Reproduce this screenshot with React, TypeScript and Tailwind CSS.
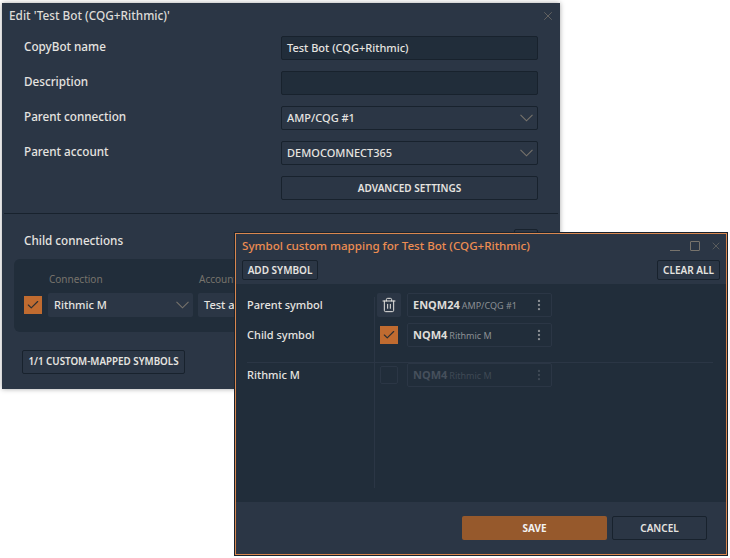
import React from "react";
import { Check, X, Trash2, EllipsisVertical } from "lucide-react";

const fieldText = "text-[11px] font-medium text-[#e6e4e0]";

function Chevron() {
  return (
    <svg width="13" height="8" viewBox="0 0 13 8" fill="none" stroke="#77736c" strokeWidth="1.1" className="shrink-0">
      <path d="M0.5 0.8 L6.5 6.8 L12.5 0.8" />
    </svg>
  );
}

function FormRow({ label, children }: { label: string; children: React.ReactNode }) {
  return (
    <div className="flex h-6 items-start pr-[22px]">
      <span className="w-[257px] pt-px text-[11.7px] font-medium leading-[18px] text-[#e6e4e0]">{label}</span>
      <div className="w-[257px]">{children}</div>
    </div>
  );
}

function TextBox({ value }: { value?: string }) {
  return (
    <div className={`flex h-6 items-center rounded-[2px] border border-[#18222d] bg-[#212d3a] pl-[5px] ${fieldText}`}>
      {value}
    </div>
  );
}

function SelectBox({ value }: { value: string }) {
  return (
    <div
      className={`flex h-6 items-center justify-between rounded-[2px] border border-[#18222d] bg-[#2b3645] pl-[5px] pr-1 ${fieldText}`}
    >
      <span>{value}</span>
      <Chevron />
    </div>
  );
}

function SymbolBox({ name, source, dim }: { name: string; source: string; dim?: boolean }) {
  return (
    <div className="flex h-6 w-[145px] items-center justify-between rounded-[2px] border border-[#2b3645] pl-[5px] pr-[5px]">
      <span className={dim ? "text-[11px] font-bold text-[#46505c]" : "text-[11px] font-bold text-[#dedcd8]"}>
        {name}
        <span className={dim ? "ml-[2px] text-[9px] font-normal text-[#3f4955]" : "ml-[2px] text-[9px] font-normal text-[#8b8f94]"}>
          {source}
        </span>
      </span>
      <EllipsisVertical className={dim ? "h-3.5 w-3.5 text-[#3f4955]" : "h-3.5 w-3.5 text-[#8b8f94]"} strokeWidth={2} />
    </div>
  );
}

function CheckBox() {
  return (
    <div className="flex h-[18px] w-[18px] items-center justify-center bg-[#c06b30]">
      <Check className="h-3.5 w-3.5 text-[#2b2f33]" strokeWidth={2} />
    </div>
  );
}

function OutlineButton({ children, className }: { children: React.ReactNode; className: string }) {
  return (
    <button
      className={`flex items-center justify-center rounded-[2px] border border-[#18222d] font-semibold text-[#e6e4e0] ${className}`}
    >
      {children}
    </button>
  );
}

export default function App() {
  return (
    <div className="relative h-[558px] w-[730px] overflow-hidden bg-white font-['Noto_Sans',sans-serif]">
      {/* Edit window */}
      <div className="absolute left-[2px] top-[3px] h-[386px] w-[558px] bg-[#2b3645] shadow-[0_0_5px_rgba(0,0,0,0.35)]">
        <div className="flex h-[25px] items-center justify-between pl-[7px] pr-[5px]">
          <span className="text-[11.8px] font-medium text-[#dedcd8]">Edit 'Test Bot (CQG+Rithmic)'</span>
          <X className="h-3.5 w-3.5 text-[#77736c]" strokeWidth={1.25} />
        </div>

        <div className="flex flex-col gap-[11px] pl-[22px] pt-2">
          <FormRow label="CopyBot name">
            <TextBox value="Test Bot (CQG+Rithmic)" />
          </FormRow>
          <FormRow label="Description">
            <TextBox />
          </FormRow>
          <FormRow label="Parent connection">
            <SelectBox value="AMP/CQG #1" />
          </FormRow>
          <FormRow label="Parent account">
            <SelectBox value="DEMOCOMNECT365" />
          </FormRow>
          <FormRow label="">
            <OutlineButton className="h-6 w-full text-[10px]">ADVANCED SETTINGS</OutlineButton>
          </FormRow>
        </div>

        <div className="mx-0.5 mt-[13px] h-px bg-[#18222d]" />

        <div className="flex items-center justify-between pl-[22px] pr-[22px] pt-[13px]">
          <span className="pb-0.5 text-[11.7px] font-medium leading-[26px] text-[#e6e4e0]">Child connections</span>
          <div className="h-6 w-6 rounded-[2px] border border-[#18222d]" />
        </div>

        <div className="mx-3 mt-[4px] h-[73px] rounded-md bg-[#212d3a] pl-2.5 pt-[13px]">
          <div className="flex gap-[5px] pl-[25px] text-[10px] leading-[14px] text-[#77736c]">
            <span className="w-[145px]">Connection</span>
            <span>Account</span>
          </div>
          <div className="mt-[7px] flex items-center">
            <CheckBox />
            <div className={`ml-1.5 flex h-6 w-[145px] items-center justify-between rounded-[2px] bg-[#2b3645] pl-1.5 pr-1 ${fieldText}`}>
              <span>Rithmic M</span>
              <Chevron />
            </div>
            <div className={`ml-[5px] flex h-6 w-[145px] items-center rounded-[2px] bg-[#2b3645] pl-1.5 ${fieldText}`}>
              Test account
            </div>
          </div>
        </div>

        <OutlineButton className="ml-5 mt-[18px] h-6 w-[163px] text-[9.8px]">1/1 CUSTOM-MAPPED SYMBOLS</OutlineButton>
      </div>

      {/* Symbol mapping window */}
      <div className="absolute left-[234px] top-[232px] flex h-[324px] w-[494px] flex-col border border-[#18222d]">
        <div className="flex h-full flex-col border border-[#d9874f] bg-[#2b3645]">
          <div className="flex h-[24px] items-center justify-between pl-[6px] pr-[4px]">
            <span className="text-[11.6px] font-medium text-[#ee8d52]">Symbol custom mapping for Test Bot (CQG+Rithmic)</span>
            <div className="flex items-center gap-[10px] text-[#77736c]">
              <div className="mt-[9px] h-px w-2.5 bg-[#77736c]" />
              <div className="h-2.5 w-2.5 rounded-[1px] border border-[#77736c]" />
              <X className="h-3 w-3" strokeWidth={1.25} />
            </div>
          </div>
          <div className="flex justify-between pl-[6px] pr-[6px] pt-[2px]">
            <OutlineButton className="h-5 w-[76px] text-[10px]">ADD SYMBOL</OutlineButton>
            <OutlineButton className="h-5 w-[63px] text-[10px]">CLEAR ALL</OutlineButton>
          </div>

          <div className="relative mt-1 flex h-[218px] flex-col bg-[#212d3a] pl-[11px] pt-[9px]">
            <div className="absolute left-[138px] top-[13px] h-[191px] w-px bg-[#2b3645]" />
            <div className="flex h-6 items-center">
              <span className="w-[130px] text-[11px] font-medium text-[#e6e4e0]">Parent symbol</span>
              <div className="mr-1.5 flex h-6 w-6 items-center justify-center rounded-[2px] bg-[#2b3645]">
                <Trash2 className="h-4 w-4 text-[#e6e4e0]" strokeWidth={1.5} />
              </div>
              <SymbolBox name="ENQM24" source="AMP/CQG #1" />
            </div>
            <div className="mt-1.5 flex h-6 items-center">
              <span className="w-[133px] text-[11px] font-medium text-[#e6e4e0]">Child symbol</span>
              <div className="mr-[9px]">
                <CheckBox />
              </div>
              <SymbolBox name="NQM4" source="Rithmic M" />
            </div>
            <div className="mr-[13px] mt-[15px] h-px bg-[#2b3645]" />
            <div className="flex h-6 items-center">
              <span className="w-[133px] text-[11px] font-medium text-[#e6e4e0]">Rithmic M</span>
              <div className="mr-[9px] h-[18px] w-[18px] rounded-[2px] border border-[#2b3645]" />
              <SymbolBox name="NQM4" source="Rithmic M" dim />
            </div>
          </div>

          <div className="flex flex-1 items-start justify-end gap-[5px] pr-[19px] pt-3.5">
            <button className="h-6 w-[145px] rounded-[2px] bg-[#96592c] text-[10px] font-bold text-[#f2f2f2]">SAVE</button>
            <OutlineButton className="h-6 w-[95px] text-[10px]">CANCEL</OutlineButton>
          </div>
        </div>
      </div>
    </div>
  );
}
